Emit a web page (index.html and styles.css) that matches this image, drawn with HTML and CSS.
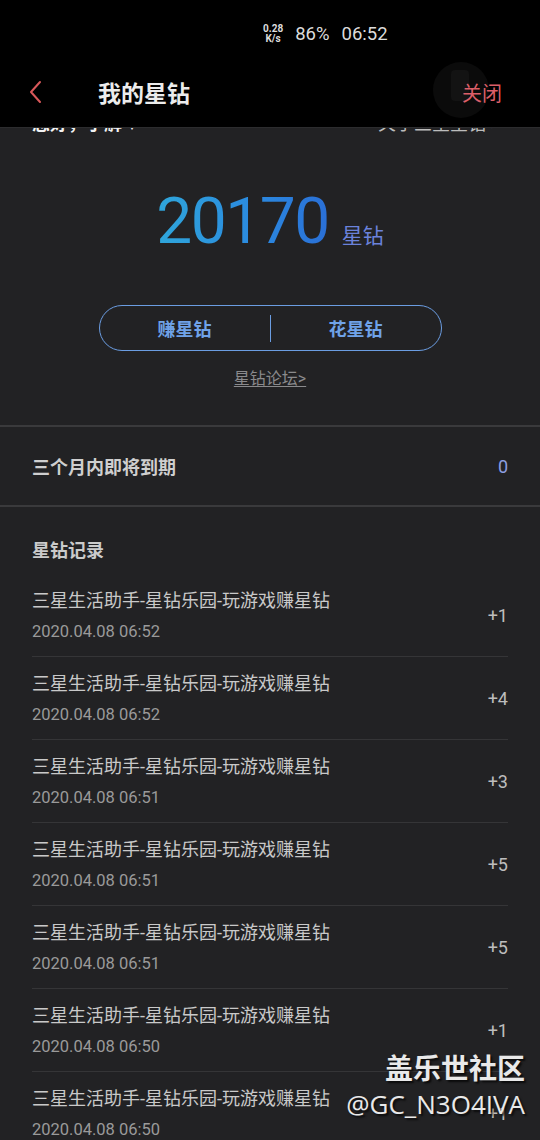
FILE: index.html
```html
<!DOCTYPE html>
<html lang="zh-CN">
<head>
<meta charset="utf-8">
<title>我的星钻</title>
<link rel="stylesheet" href="styles.css">
</head>
<body>
<div class="phone">
  <div class="statusbar">
    <div class="speed"><span>0.28</span><span>K/s</span></div>
    <span class="battery">86%</span>
    <span class="clock">06:52</span>
  </div>
  <header class="appbar">
    <svg class="back" width="14" height="24" viewBox="0 0 14 24"><path d="M11 2 L2 12 L11 22" fill="none" stroke="#d9585a" stroke-width="2" stroke-linecap="round" stroke-linejoin="round"/></svg>
    <h1 class="title">我的星钻</h1>
    <div class="close-wrap"><span class="close">关闭</span></div>
  </header>
  <main class="content">
    <section class="balance">
      <div class="intro">
        <span class="hello">您好，了解<span class="chev">∨</span></span>
        <span class="about">关于三星星钻 &gt;</span>
      </div>
      <div class="amount">
        <span class="num">20170</span>
        <span class="unit">星钻</span>
      </div>
      <div class="pill">
        <span class="pill-btn">赚星钻</span>
        <span class="pill-div"></span>
        <span class="pill-btn">花星钻</span>
      </div>
      <a class="forum">星钻论坛&gt;</a>
    </section>
    <section class="expire">
      <span class="expire-label">三个月内即将到期</span>
      <span class="expire-val">0</span>
    </section>
    <section class="records">
      <h2 class="records-title">星钻记录</h2>
      <ul class="list">
        <li class="row"><div class="info"><span class="name">三星生活助手-星钻乐园-玩游戏赚星钻</span><span class="date">2020.04.08 06:52</span></div><span class="val">+1</span></li>
        <li class="row"><div class="info"><span class="name">三星生活助手-星钻乐园-玩游戏赚星钻</span><span class="date">2020.04.08 06:52</span></div><span class="val">+4</span></li>
        <li class="row"><div class="info"><span class="name">三星生活助手-星钻乐园-玩游戏赚星钻</span><span class="date">2020.04.08 06:51</span></div><span class="val">+3</span></li>
        <li class="row"><div class="info"><span class="name">三星生活助手-星钻乐园-玩游戏赚星钻</span><span class="date">2020.04.08 06:51</span></div><span class="val">+5</span></li>
        <li class="row"><div class="info"><span class="name">三星生活助手-星钻乐园-玩游戏赚星钻</span><span class="date">2020.04.08 06:51</span></div><span class="val">+5</span></li>
        <li class="row"><div class="info"><span class="name">三星生活助手-星钻乐园-玩游戏赚星钻</span><span class="date">2020.04.08 06:50</span></div><span class="val">+1</span></li>
        <li class="row"><div class="info"><span class="name">三星生活助手-星钻乐园-玩游戏赚星钻</span><span class="date">2020.04.08 06:50</span></div><span class="val">+1</span></li>
      </ul>
    </section>
  </main>
  <div class="watermark">
    <div class="wm-1">盖乐世社区</div>
    <div class="wm-2">@GC_N3O4IVA</div>
  </div>
</div>
</body>
</html>
```

FILE: styles.css
```css
* { box-sizing: border-box; }
html, body { margin: 0; padding: 0; background: #222224; }
body {
  width: 540px;
  height: 1140px;
  overflow: hidden;
  font-family: Roboto, "Noto Sans CJK SC", sans-serif;
}
.phone {
  position: relative;
  width: 540px;
  height: 1140px;
  display: flex;
  flex-direction: column;
  overflow: hidden;
}
.statusbar {
  height: 65px;
  background: #000;
  display: flex;
  align-items: center;
  padding-left: 263px;
  color: #dcdcdc;
  font-size: 18.5px;
  padding-top: 2px;
}
.speed {
  display: flex;
  flex-direction: column;
  align-items: center;
  font-size: 10px;
  font-weight: 700;
  line-height: 10px;
  margin-right: 12px;
}
.battery { margin-right: 12px; }
.appbar {
  height: 63px;
  background: #000;
  display: flex;
  align-items: center;
  padding-left: 29px;
  padding-bottom: 8px;
  border-bottom: 1px solid #2c2c2e;
  position: relative;
  z-index: 2;
}
.back { display: block; }
.title {
  margin: 0 0 0 55px;
  font-size: 23px;
  font-weight: 700;
  color: #ececec;
  flex: 1;
}
.close-wrap {
  position: relative;
  margin-right: 38px;
}
.close-wrap::before {
  content: "";
  position: absolute;
  left: -29px;
  top: -16px;
  width: 56px;
  height: 56px;
  border-radius: 50%;
  background: #0b0b0b;
}
.close-wrap::after {
  content: "";
  position: absolute;
  left: -11px;
  top: -8px;
  width: 18px;
  height: 31px;
  border-radius: 4px;
  background: #131313;
}
.close {
  position: relative;
  z-index: 1;
  font-size: 20px;
  color: #dc5e68;
}
.content {
  flex: 1;
  overflow: hidden;
  background: #222224;
  position: relative;
  z-index: 1;
}
.balance {
  display: flex;
  flex-direction: column;
  align-items: center;
  padding-bottom: 36px;
  border-bottom: 2px solid #3a3a3c;
}
.intro {
  align-self: stretch;
  display: flex;
  justify-content: space-between;
  padding: 0 40px 0 32px;
  height: 30px;
  line-height: 30px;
  margin-top: -19px;
  font-size: 18px;
}
.hello { color: #f2f2f2; font-weight: 700; }
.chev { font-size: 12px; margin-left: 4px; }
.about { color: #bcbcbc; }
.amount {
  display: flex;
  align-items: baseline;
  margin-top: 51px;
}
.num {
  font-size: 64px;
  line-height: 64px;
  letter-spacing: -1.5px;
  background: linear-gradient(90deg, #2fa6da 0%, #2b8be0 55%, #2a6fd6 100%);
  -webkit-background-clip: text;
  background-clip: text;
  color: transparent;
}
.unit {
  font-size: 21px;
  color: #6b82db;
  margin-left: 13px;
}
.pill {
  margin-top: 51px;
  width: 343px;
  height: 46px;
  border: 1.5px solid #6b9de2;
  border-radius: 23px;
  display: flex;
  align-items: center;
}
.pill-btn {
  flex: 1;
  text-align: center;
  font-size: 18px;
  font-weight: 700;
  color: #6fa2e8;
}
.pill-div {
  width: 1px;
  height: 27px;
  background: #6b9de2;
}
.forum {
  margin-top: 18px;
  font-size: 16px;
  line-height: 20px;
  color: #8a8a8c;
  text-decoration: underline;
  text-underline-offset: 2px;
}
.expire {
  height: 80px;
  display: flex;
  align-items: center;
  justify-content: space-between;
  padding: 0 32px;
  border-bottom: 2px solid #3a3a3c;
}
.expire-label { font-size: 18px; font-weight: 700; color: #cfcfcf; }
.expire-val { font-size: 18px; color: #8d9ee2; }
.records { padding: 32px 32px 0; }
.records-title {
  margin: 0;
  font-size: 18px;
  line-height: 24px;
  font-weight: 700;
  color: #cbcbcb;
}
.list {
  list-style: none;
  margin: 11px 0 0;
  padding: 0;
}
.row {
  display: flex;
  align-items: center;
  justify-content: space-between;
  padding: 15px 0 14px;
  border-bottom: 1px solid #353537;
}
.info { display: flex; flex-direction: column; gap: 9px; }
.name { font-size: 18px; line-height: 24px; color: #c9c9c9; }
.date { font-size: 16.5px; line-height: 20px; color: #9a9a9a; }
.val { font-size: 18px; color: #bdbdbd; }
.watermark {
  position: absolute;
  right: 15px;
  bottom: 20px;
  z-index: 5;
  text-align: right;
  color: #e9e9e9;
  text-shadow: 2px 2px 2px rgba(0,0,0,0.7);
}
.wm-1 { font-size: 28px; font-weight: 700; line-height: 36px; }
.wm-2 { font-size: 26px; line-height: 32px; font-family: "Open Sans", "Noto Sans", sans-serif; }
```
